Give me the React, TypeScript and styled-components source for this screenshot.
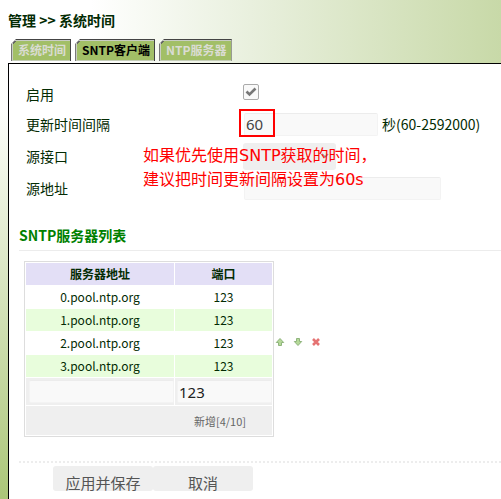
import React from "react";
import styled, { createGlobalStyle } from "styled-components";

const sans = '"Noto Sans CJK SC", sans-serif';
const noteSans = '"DejaVu Sans", "Noto Sans CJK SC", sans-serif';
const fieldSans = '"Noto Sans", "Noto Sans CJK SC", sans-serif';

const GlobalStyle = createGlobalStyle`
  *, *::before, *::after { box-sizing: border-box; }
  html, body { margin: 0; padding: 0; }
  body { font-family: ${sans}; font-size: 14px; color: #032b03; background: #fff; }
`;

const Page = styled.div`
  min-height: 100vh;
  display: flex;
  flex-direction: column;
  background:
    linear-gradient(to right, #fff 0, #fff 18%, #e9f0de 50%, #c8d9a8 100%) top / 100% 64px no-repeat,
    linear-gradient(to bottom, #fff 0, #fdfefb 22%, #abc678 100%);
`;

const Breadcrumb = styled.h1`
  margin: 0;
  padding: 10px 8px 0;
  height: 39px;
  font-size: 14px;
  line-height: 20px;
  font-weight: 700;
`;

const Tabs = styled.nav`
  display: flex;
  gap: 4px;
  padding-left: 11px;
  height: 24px;
`;

const Tab = styled.a<{ $active?: boolean }>`
  height: 22px;
  padding: 0 4px 0 6px;
  font-size: 12px;
  line-height: 20px;
  font-weight: 700;
  text-decoration: none;
  white-space: nowrap;
  color: ${(p) => (p.$active ? "#000" : "#dadcd3")};
  background: linear-gradient(135deg, #666 0 5px, #a2bf67 5px) border-box;
  border: solid #444;
  border-width: 1px 1px 0 1px;
  border-left-color: #777;
  box-shadow: inset 0 1px #c9cdc4, inset 0 -1px #c5cdb8, inset 1px 0 #c9cdc4;
  clip-path: polygon(5px 0, 100% 0, 100% 100%, 0 100%, 0 5px);
`;

const Panel = styled.main`
  flex: 1;
  background: #fff;
  border: solid #000;
  border-width: 1px 0 0 1px;
  margin-left: 8px;
  padding: 15px 0 8px 10px;
`;

const Form = styled.form`
  margin: 0;
`;

const Settings = styled.div`
  position: relative;
  padding-left: 7px;
`;

const Row = styled.div<{ $short?: boolean }>`
  display: grid;
  grid-template-columns: 217px 1fr;
  align-items: center;
  height: ${(p) => (p.$short ? 29 : 32)}px;
`;

const Label = styled.label`
  line-height: 20px;
`;

const Control = styled.div`
  display: flex;
  align-items: center;
  gap: 4px;
`;

const CheckWrap = styled.span`
  display: grid;
  width: 16px;
  height: 16px;
  margin-top: -3px;
  > * { grid-area: 1 / 1; }
  svg { pointer-events: none; }
`;

const Check = styled.input`
  appearance: none;
  margin: 0;
  width: 16px;
  height: 16px;
  border: 1px solid #aaa;
  border-radius: 2px;
  background: #f9f9f9;
`;

const Field = styled.input<{ $w: string; $dark?: boolean }>`
  width: ${(p) => p.$w};
  height: 23px;
  margin: 0 0 0 1px;
  padding: 0 1px;
  border: 1px solid #f3f3f3;
  border-top-color: #ececec;
  border-radius: 2px;
  background: #f9f9f9;
  color: ${(p) => (p.$dark ? "#222" : "#444")};
  font: 15px/21px ${fieldSans};
`;

const Picker = styled.select`
  appearance: none;
  width: 93px;
  height: 27px;
  border: 0;
  border-radius: 3px;
  background: #efefef;
  margin: 0;
`;

const PickerWrap = styled.span`
  display: grid;
  align-items: center;
  > * { grid-area: 1 / 1; }
  svg { justify-self: end; margin-right: 7px; pointer-events: none; }
`;

const Note = styled.p`
  position: absolute;
  left: 124px;
  top: 65px;
  margin: 0;
  font: 16px/24px ${noteSans};
  color: #f00;
  white-space: nowrap;
  pointer-events: none;
`;

const Highlight = styled.span`
  position: absolute;
  left: 220px;
  top: 30px;
  width: 36px;
  height: 28px;
  border: 2px solid #f00;
  pointer-events: none;
`;

const SectionTitle = styled.h2`
  margin: 20px 0 0;
  padding-bottom: 4px;
  border-bottom: 1px solid #ececec;
  font-size: 14px;
  line-height: 22px;
  font-weight: 700;
  color: #008000;
`;

const ListArea = styled.div`
  display: flex;
  padding: 10px 0 0 5px;
`;

const ServerTable = styled.table`
  width: 250px;
  table-layout: fixed;
  border: 1px solid #ddd;
  border-collapse: separate;
  border-spacing: 1px;
  font-size: 12px;
  line-height: 22px;
  text-align: center;
`;

const Head = styled.th`
  padding: 0;
  height: 22px;
  background: #e3dff6;
`;

const Cell = styled.td<{ $tint?: boolean }>`
  padding: 0;
  height: 22px;
  background: ${(p) => (p.$tint ? "#e8fddc" : "#fff")};
`;

const EntryCell = styled.td`
  height: 27px;
  padding: 0 0 0 1px;
  background: #efefef;
  line-height: 0;
  overflow: hidden;
`;

const FootCell = styled.td`
  height: 29px;
  padding: 0 26px 0 0;
  background: #efefef;
  text-align: right;
`;

const AddButton = styled.button`
  border: 0;
  padding: 0;
  background: none;
  color: #666;
  font: 11px/20px ${sans};
`;

const RowActions = styled.div`
  display: flex;
  gap: 8px;
  padding: 76px 0 0 1px;
`;

const IconButton = styled.button`
  width: 10px;
  height: 10px;
  padding: 0;
  border: 0;
  background: none;
  svg { display: block; }
`;

const Footer = styled.div`
  display: flex;
  margin-top: 24px;
  padding: 5px 0 0 34px;
  background: repeating-linear-gradient(to right, #ededed 0 2px, transparent 2px 4px) top / 100% 2px no-repeat;
`;

const ActionButton = styled.button`
  width: 100px;
  height: 25px;
  padding: 9px 0 0;
  border: 0;
  border-radius: 3px;
  background: #efefef;
  color: #555;
  font: 15px/16px ${sans};
`;

const servers = ["0.pool.ntp.org", "1.pool.ntp.org", "2.pool.ntp.org", "3.pool.ntp.org"];

const Arrow = ({ down }: { down?: boolean }) => (
  <svg width="10" height="10" viewBox="0 0 10 10" aria-hidden="true">
    <path
      d={down ? "M3.5 1.5h3v3h2.2L5 8.5 1.3 4.5h2.2z" : "M3.5 8.5h3v-3h2.2L5 1.5 1.3 5.5h2.2z"}
      fill="#b5d999"
      stroke="#8fb47c"
    />
  </svg>
);

export default function App() {
  return (
    <Page>
      <GlobalStyle />
      <Breadcrumb>管理 &gt;&gt; 系统时间</Breadcrumb>
      <Tabs>
        <Tab href="#time">系统时间</Tab>
        <Tab href="#sntp" $active aria-current="page">SNTP客户端</Tab>
        <Tab href="#ntp">NTP服务器</Tab>
      </Tabs>
      <Panel>
        <Form onSubmit={(e) => e.preventDefault()}>
          <Settings>
            <Row $short>
              <Label htmlFor="enable">启用</Label>
              <CheckWrap>
                <Check id="enable" type="checkbox" defaultChecked />
                <svg width="16" height="16" viewBox="0 0 16 16" aria-hidden="true">
                  <path d="M3.5 7.5l3 3 6-6" fill="none" stroke="#777" strokeWidth="2.6" />
                </svg>
              </CheckWrap>
            </Row>
            <Row>
              <Label htmlFor="interval">更新时间间隔</Label>
              <Control>
                <Field id="interval" $w="134px" defaultValue="60" />
                <span>秒(60-2592000)</span>
              </Control>
            </Row>
            <Row>
              <Label htmlFor="iface">源接口</Label>
              <Control>
                <PickerWrap>
                  <Picker id="iface" />
                  <svg width="8" height="6" viewBox="0 0 8 6" aria-hidden="true">
                    <path d="M1 1l3 3 3-3" fill="none" stroke="#888" strokeWidth="1.5" />
                  </svg>
                </PickerWrap>
              </Control>
            </Row>
            <Row>
              <Label htmlFor="address">源地址</Label>
              <Control>
                <Field id="address" $w="197px" />
              </Control>
            </Row>
            <Highlight />
            <Note>
              如果优先使用SNTP获取的时间，
              <br />
              建议把时间更新间隔设置为60s
            </Note>
          </Settings>
          <SectionTitle>SNTP服务器列表</SectionTitle>
          <ListArea>
            <ServerTable>
              <colgroup>
                <col width="148" />
                <col />
              </colgroup>
              <thead>
                <tr>
                  <Head scope="col">服务器地址</Head>
                  <Head scope="col">端口</Head>
                </tr>
              </thead>
              <tbody>
                {servers.map((server, i) => (
                  <tr key={server}>
                    <Cell $tint={i % 2 === 1}>{server}</Cell>
                    <Cell $tint={i % 2 === 1}>123</Cell>
                  </tr>
                ))}
                <tr>
                  <EntryCell>
                    <Field aria-label="服务器地址" $w="145px" $dark />
                  </EntryCell>
                  <EntryCell>
                    <Field aria-label="端口" $w="95px" $dark defaultValue="123" />
                  </EntryCell>
                </tr>
              </tbody>
              <tfoot>
                <tr>
                  <FootCell colSpan={2}>
                    <AddButton type="button">新增[4/10]</AddButton>
                  </FootCell>
                </tr>
              </tfoot>
            </ServerTable>
            <RowActions>
              <IconButton type="button" aria-label="上移"><Arrow /></IconButton>
              <IconButton type="button" aria-label="下移"><Arrow down /></IconButton>
              <IconButton type="button" aria-label="删除">
                <svg width="10" height="10" viewBox="0 0 10 10" aria-hidden="true">
                  <path d="M2 2l6 6M8 2l-6 6" stroke="#e57373" strokeWidth="2.6" />
                </svg>
              </IconButton>
            </RowActions>
          </ListArea>
          <Footer>
            <ActionButton type="submit">应用并保存</ActionButton>
            <ActionButton type="reset">取消</ActionButton>
          </Footer>
        </Form>
      </Panel>
    </Page>
  );
}
